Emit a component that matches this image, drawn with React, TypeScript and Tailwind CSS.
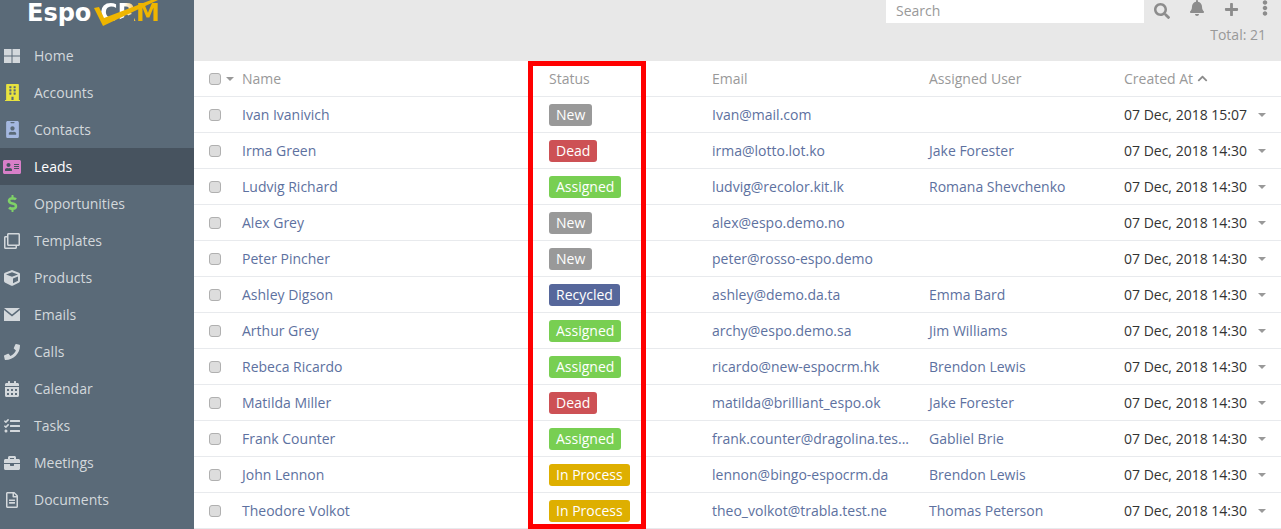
import {
  FaBuilding, FaIdBadge, FaAddressCard, FaDollarSign, FaRegClone, FaCube,
  FaPhone, FaCalendarAlt, FaTasks, FaBriefcase, FaRegFileAlt, FaSearch, FaBell, FaPlus, FaEllipsisV, FaChevronUp,
} from 'react-icons/fa'

function HomeIcon() {
  return (
    <svg width="16" height="14" viewBox="0 0 16 14" fill="currentColor">
      <rect x="0" y="0" width="7.5" height="6.5" />
      <rect x="8.5" y="0" width="7.5" height="6.5" />
      <rect x="0" y="7.5" width="7.5" height="6.5" />
      <rect x="8.5" y="7.5" width="7.5" height="6.5" />
    </svg>
  )
}

function MailIcon() {
  return (
    <svg width="16" height="13" viewBox="0 0 16 13" fill="currentColor">
      <path d="M0 0H16L8 6.5Z" />
      <path d="M0 2L8 8.5L16 2V13H0Z" />
    </svg>
  )
}

const NAV = [
  { label: 'Home', Icon: HomeIcon, color: 'text-[#d3d8dc]', size: 'text-[16px]' },
  { label: 'Accounts', Icon: FaBuilding, color: 'text-[#e8e33f]', size: 'text-[17px]' },
  { label: 'Contacts', Icon: FaIdBadge, color: 'text-[#a4b8e0]', size: 'text-[17px]' },
  { label: 'Leads', Icon: FaAddressCard, color: 'text-[#d87fc8]', size: 'text-[18px]' },
  { label: 'Opportunities', Icon: FaDollarSign, color: 'text-[#7fd267]', size: 'text-[17px]' },
  { label: 'Templates', Icon: FaRegClone, color: 'text-[#d3d8dc]', size: 'text-[16px]' },
  { label: 'Products', Icon: FaCube, color: 'text-[#d3d8dc]', size: 'text-[16px]' },
  { label: 'Emails', Icon: MailIcon, color: 'text-[#d3d8dc]', size: 'text-[16px]' },
  { label: 'Calls', Icon: FaPhone, color: 'text-[#d3d8dc]', size: 'text-[16px]' },
  { label: 'Calendar', Icon: FaCalendarAlt, color: 'text-[#d3d8dc]', size: 'text-[16px]' },
  { label: 'Tasks', Icon: FaTasks, color: 'text-[#d3d8dc]', size: 'text-[16px]' },
  { label: 'Meetings', Icon: FaBriefcase, color: 'text-[#d3d8dc]', size: 'text-[16px]' },
  { label: 'Documents', Icon: FaRegFileAlt, color: 'text-[#d3d8dc]', size: 'text-[16px]' },
]

const STATUS: Record<string, string> = {
  New: 'bg-[#999999]',
  Dead: 'bg-[#cd5155]',
  Assigned: 'bg-[#78cf52]',
  Recycled: 'bg-[#56679b]',
  'In Process': 'bg-[#deaf00]',
}

const ROWS = [
  ['Ivan Ivanivich', 'New', 'Ivan@mail.com', '', '07 Dec, 2018 15:07'],
  ['Irma Green', 'Dead', 'irma@lotto.lot.ko', 'Jake Forester', '07 Dec, 2018 14:30'],
  ['Ludvig Richard', 'Assigned', 'ludvig@recolor.kit.lk', 'Romana Shevchenko', '07 Dec, 2018 14:30'],
  ['Alex Grey', 'New', 'alex@espo.demo.no', '', '07 Dec, 2018 14:30'],
  ['Peter Pincher', 'New', 'peter@rosso-espo.demo', '', '07 Dec, 2018 14:30'],
  ['Ashley Digson', 'Recycled', 'ashley@demo.da.ta', 'Emma Bard', '07 Dec, 2018 14:30'],
  ['Arthur Grey', 'Assigned', 'archy@espo.demo.sa', 'Jim Williams', '07 Dec, 2018 14:30'],
  ['Rebeca Ricardo', 'Assigned', 'ricardo@new-espocrm.hk', 'Brendon Lewis', '07 Dec, 2018 14:30'],
  ['Matilda Miller', 'Dead', 'matilda@brilliant_espo.ok', 'Jake Forester', '07 Dec, 2018 14:30'],
  ['Frank Counter', 'Assigned', 'frank.counter@dragolina.tes...', 'Gabliel Brie', '07 Dec, 2018 14:30'],
  ['John Lennon', 'In Process', 'lennon@bingo-espocrm.da', 'Brendon Lewis', '07 Dec, 2018 14:30'],
  ['Theodore Volkot', 'In Process', 'theo_volkot@trabla.test.ne', 'Thomas Peterson', '07 Dec, 2018 14:30'],
]

function Checkbox() {
  return <span className="block h-3 w-3 rounded-[3px] border border-[#b0b0b0] bg-[#dddddd]" />
}

function Caret() {
  return <span className="block h-0 w-0 border-x-[4px] border-t-[4px] border-x-transparent border-t-[#999999]" />
}

export default function App() {
  return (
    <div className="relative flex h-[529px] w-[1281px] overflow-hidden bg-white text-[14px] font-['Open_Sans',sans-serif]">
      {/* Sidebar */}
      <aside className="w-[194px] shrink-0 bg-[#5a6a78]">
        <div className="relative h-[37px] font-['DejaVu_Sans',sans-serif] text-[24px] font-bold leading-[28px]">
          <span className="absolute left-[27px] top-[-1px] text-white">Espo</span>
          <span className="absolute left-[100px] top-[-1px] bg-gradient-to-r from-white from-40% to-[#eeb500] to-60% bg-clip-text text-transparent">CRM</span>
          <svg className="absolute left-[90px] top-0" width="70" height="30" viewBox="0 0 70 30">
            <path d="M14 26L44 13V30H14Z" fill="#5a6a78" />
            <path d="M4 8L13 26L68 0H61L14 18L9 7Z" fill="#eeb500" />
          </svg>
        </div>
        <nav>
          {NAV.map(({ label, Icon, color, size }) => (
            <div
              key={label}
              className={`flex h-[37px] items-center ${label === 'Leads' ? 'bg-[#47535f] text-white' : 'text-[#d3d8dc]'}`}
            >
              <span className={`mr-[10px] flex w-[24px] justify-center ${color} ${size}`}>
                <Icon />
              </span>
              <span>{label}</span>
            </div>
          ))}
        </nav>
      </aside>

      <main className="flex-1">
        {/* Top bar */}
        <div className="h-[61px] bg-[#e8e8e8]">
          <div className="flex h-[23px] items-center">
            <div className="ml-[692px] flex h-[23px] w-[258px] items-center bg-white pb-[3px] pl-[10px] text-[#999999]">Search</div>
            <FaSearch className="mb-[2px] ml-[10px] text-[16px] text-[#8c8c8c]" />
            <FaBell className="mb-[7px] ml-[19px] text-[16px] text-[#8c8c8c]" />
            <FaPlus className="mb-[4px] ml-[19px] text-[15px] text-[#8c8c8c]" />
            <FaEllipsisV className="mb-[7px] ml-[18px] text-[16px] text-[#8c8c8c]" />
          </div>
          <div className="pr-[15px] pt-[1px] text-right text-[#999999]">Total: 21</div>
        </div>

        {/* List */}
        <div className="flex h-[36px] items-center border-b border-[#e8eaed] text-[#999999]">
          <div className="flex w-[48px] items-center pl-[15px]">
            <Checkbox />
            <span className="ml-[5px]"><Caret /></span>
          </div>
          <div className="w-[307px]">Name</div>
          <div className="w-[163px]">Status</div>
          <div className="w-[217px]">Email</div>
          <div className="w-[195px]">Assigned User</div>
          <div className="flex items-center">
            Created At
            <FaChevronUp className="ml-[4px] text-[11px] text-[#8c8c8c]" />
          </div>
        </div>
        {ROWS.map(([name, status, email, user, created]) => (
          <div key={name} className="flex h-[36px] items-center border-b border-[#e8eaed]">
            <div className="w-[48px] pl-[15px]"><Checkbox /></div>
            <div className="w-[307px] text-[#5d71a0]">{name}</div>
            <div className="w-[163px]">
              <span className={`inline-block rounded-[3px] px-[7px] text-[14px] leading-[22px] text-white ${STATUS[status]}`}>{status}</span>
            </div>
            <div className="w-[217px] text-[#5d71a0]">{email}</div>
            <div className="w-[195px] text-[#5d71a0]">{user}</div>
            <div className="w-[134px] text-[#333333]">{created}</div>
            <Caret />
          </div>
        ))}
      </main>

      {/* Highlight annotation */}
      <div className="absolute left-[528px] top-[61px] h-[468px] w-[118px] border-[5px] border-[#ff0000]" />
    </div>
  )
}
